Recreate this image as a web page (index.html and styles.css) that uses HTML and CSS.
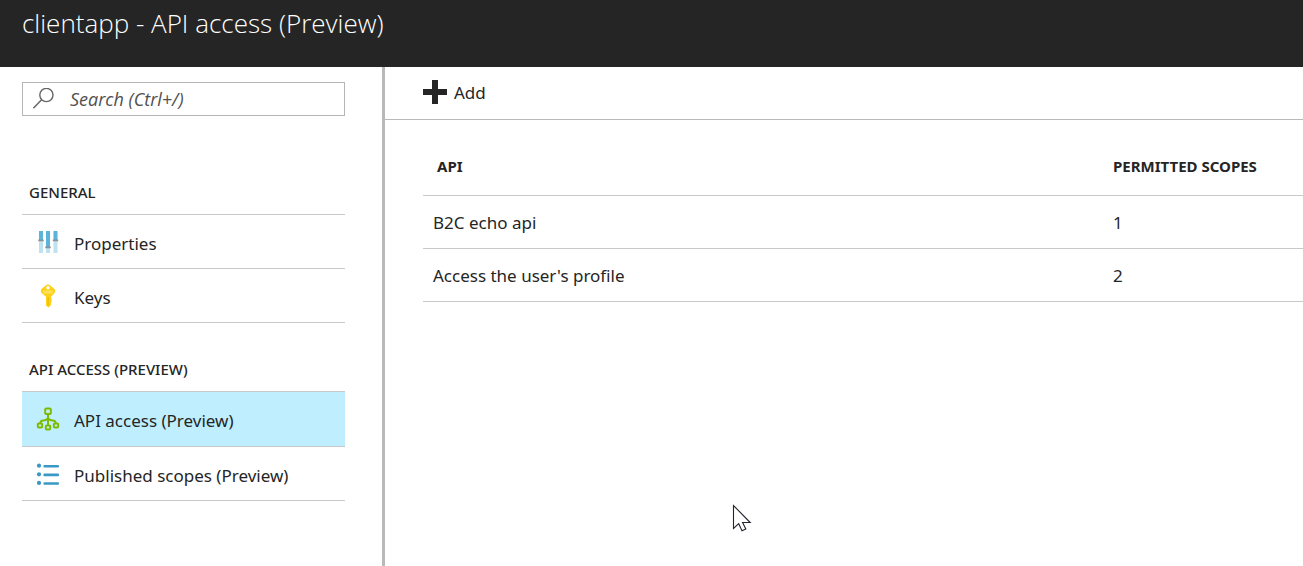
FILE: index.html
```
<!DOCTYPE html>
<html lang="en">
<head>
<meta charset="utf-8">
<meta name="viewport" content="width=device-width, initial-scale=1">
<title>clientapp - API access (Preview)</title>
<link rel="stylesheet" href="styles.css">
</head>
<body>
<header class="header"><h1 class="title">clientapp - API access (Preview)</h1></header>
<div class="layout">
  <aside class="sidebar">
    <label class="search">
      <svg class="search-icon" width="22" height="22" viewBox="0 0 22 22" fill="none" stroke="#666" stroke-width="1.4" aria-hidden="true"><circle cx="13.4" cy="7" r="6.6"/><path d="M8.6 11.8.4 20.2"/></svg>
      <input class="search-input" type="search" placeholder="Search (Ctrl+/)" aria-label="Search">
    </label>
    <nav class="nav" aria-label="Settings">
      <section class="group">
        <h2 class="group-title">GENERAL</h2>
        <ul class="menu">
          <li><a class="item" href="#properties">
            <svg class="icon" width="24" height="24" viewBox="0 0 24 24" aria-hidden="true">
              <path fill="#bfe2f1" d="M3 10h4v13H3zM10 18h4v5h-4zM17.500 10h4v13h-4z"/>
              <path fill="#59b4d9" d="M3 1h4v9H3zM10 1h4v16h-4zM17.500 1h4v9h-4z"/>
              <path fill="#8b9194" d="M2.300 9.500h5.400v1.700H2.300zM9.300 16.500h5.400v1.700H9.300zM16.800 9.500h5.400v1.700h-5.400z"/>
            </svg>Properties</a></li>
          <li><a class="item" href="#keys">
            <svg class="icon" width="24" height="24" viewBox="0 0 24 24" aria-hidden="true">
              <path fill="#fcd116" fill-rule="evenodd" d="M10 1.2Q12 0 14 1.200L18.600 5Q20 6.800 18.600 9L15 12.800V14l1 1-1 1.200 1 1.100-1 1.200V21l-2.500 2.500L10 21.400V12.800L5.600 9Q4 6.800 5.400 5ZM12 2a1.700 1.700 0 1 0 0 3.400A1.700 1.700 0 0 0 12 2Z"/>
              <path fill="#ffe05c" d="M7.400 6.400h9.200v3.200H7.400z"/><path stroke="#e8b800" stroke-width="1" d="M12.200 13v8.500"/>
            </svg>Keys</a></li>
        </ul>
      </section>
      <section class="group">
        <h2 class="group-title">API ACCESS (PREVIEW)</h2>
        <ul class="menu">
          <li><a class="item selected" href="#api-access" aria-current="page">
            <svg class="icon" width="24" height="24" viewBox="0 0 24 24" fill="none" stroke="#7fba00" stroke-width="2" aria-hidden="true">
              <rect x="9.200" y="1.500" width="5.600" height="5.600" rx="1"/><path d="M12 7.200v11M4.300 16.300c0-2 .8-2.800 3-2.800 2.500 0 3.400-.6 4.700-2.300 1.300 1.700 2.200 2.300 4.700 2.300 2.200 0 3 .8 3 2.800"/><rect x="1.800" y="16.400" width="4.400" height="4.200" rx="1"/><rect x="9.800" y="18.400" width="4.400" height="4.200" rx="1"/><rect x="17.800" y="16.400" width="4.400" height="4.200" rx="1"/>
            </svg>API access (Preview)</a></li>
          <li><a class="item" href="#published-scopes">
            <svg class="icon" width="24" height="24" viewBox="0 0 24 24" fill="#3999c6" aria-hidden="true">
              <circle cx="3" cy="3.700" r="2.100"/><circle cx="3" cy="12.300" r="2.100"/><circle cx="3" cy="20.900" r="2.100"/><rect x="7.400" y="3" width="15.600" height="2.600" rx="1"/><rect x="7.400" y="11.600" width="15.600" height="2.600" rx="1"/><rect x="7.400" y="20.200" width="15.600" height="2.600" rx="1"/>
            </svg>Published scopes (Preview)</a></li>
        </ul>
      </section>
    </nav>
  </aside>
  <main class="main">
    <div class="toolbar">
      <button class="add" type="button"><svg class="add-icon" width="24" height="24" viewBox="0 0 24 24" aria-hidden="true"><path fill="#252525" d="M9 0h6v9h9v6h-9v9H9v-9H0V9h9z"/></svg>Add</button>
    </div>
    <div class="content">
      <table class="table">
        <thead><tr><th class="name" scope="col">API</th><th class="scopes" scope="col">PERMITTED SCOPES</th></tr></thead>
        <tbody>
          <tr><td class="name">B2C echo api</td><td class="scopes">1</td></tr>
          <tr><td class="name">Access the user's profile</td><td class="scopes">2</td></tr>
        </tbody>
      </table>
    </div>
  </main>
</div>
<svg class="cursor" width="20" height="30" viewBox="0 0 20 30" aria-hidden="true"><path fill="#fff" stroke="#23232f" stroke-width="1.100" d="M1.500 1.500v23l5.200-4.800 3.300 7 3.800-1.800-3.200-6.400h7.600z"/></svg>
</body>
</html>
```
FILE: styles.css
```
* { box-sizing: border-box; }
body {
  margin: 0;
  min-height: 100vh;
  display: flex;
  flex-direction: column;
  background: #fff;
  color: #252525;
  font: 17px/24px "Noto Sans", "Open Sans", sans-serif;
}
.header {
  background: #252525;
  color: #fff;
  padding: 5px 22px 26px;
}
.title {
  margin: 0;
  font: 300 26px/36px "Open Sans", "Noto Sans", sans-serif;
}
.layout { flex: 1; display: flex; }
.sidebar {
  flex: none;
  width: 385px;
  padding: 15px 37px 0 22px;
  border-right: 3px solid #b9b9b9;
}
.search {
  display: flex;
  align-items: center;
  gap: 15px;
  height: 34px;
  padding: 0 10px;
  border: 1px solid #b5b5b5;
}
.search-icon { flex: none; }
.search-input {
  flex: 1;
  min-width: 0;
  padding: 0;
  border: 0;
  outline: 0;
  background: transparent;
  color: #252525;
  font: italic 18px/24px "Open Sans", "Noto Sans", sans-serif;
}
.search-input::placeholder { color: #505050; opacity: 1; }
.nav {
  display: flex;
  flex-direction: column;
  gap: 36px;
  padding-top: 66px;
}
.group-title {
  margin: 0;
  padding: 0 7px 12px;
  font-size: 15px;
  line-height: 20px;
  font-weight: 500;
}
.menu {
  list-style: none;
  margin: 0;
  padding: 0;
  border-top: 1px solid #c8c8c8;
}
.item {
  display: flex;
  align-items: center;
  gap: 14px;
  min-height: 54px;
  padding: 4px 14px 0;
  border-bottom: 1px solid #c8c8c8;
  color: inherit;
  text-decoration: none;
}
.icon { flex: none; margin-bottom: 4px; }
.selected { min-height: 55px; background: #bfefff; }
.main { flex: 1; min-width: 0; }
.toolbar {
  padding: 13px 38px 13px;
  border-bottom: 1px solid #b9b9b9;
}
.add {
  display: flex;
  align-items: center;
  gap: 7px;
  padding: 0;
  border: 0;
  background: none;
  color: inherit;
  font: inherit;
  line-height: 26px;
}
.add-icon { margin-bottom: 2px; }
.content { padding: 20px 0 0 38px; }
.table {
  width: 100%;
  table-layout: fixed;
  border-collapse: collapse;
}
.table th, .table td {
  text-align: left;
  border-bottom: 1px solid #c8c8c8;
}
.table th {
  height: 55px;
  padding: 0 0 2px;
  font-size: 15px;
  font-weight: 700;
}
.table td { height: 53px; padding: 2px 0 0; }
.table .scopes { width: 190px; }
.table th.name { padding-left: 14px; }
.table td.name { padding-left: 10px; }
.cursor {
  position: absolute;
  left: 732px;
  top: 504px;
  pointer-events: none;
}
```
